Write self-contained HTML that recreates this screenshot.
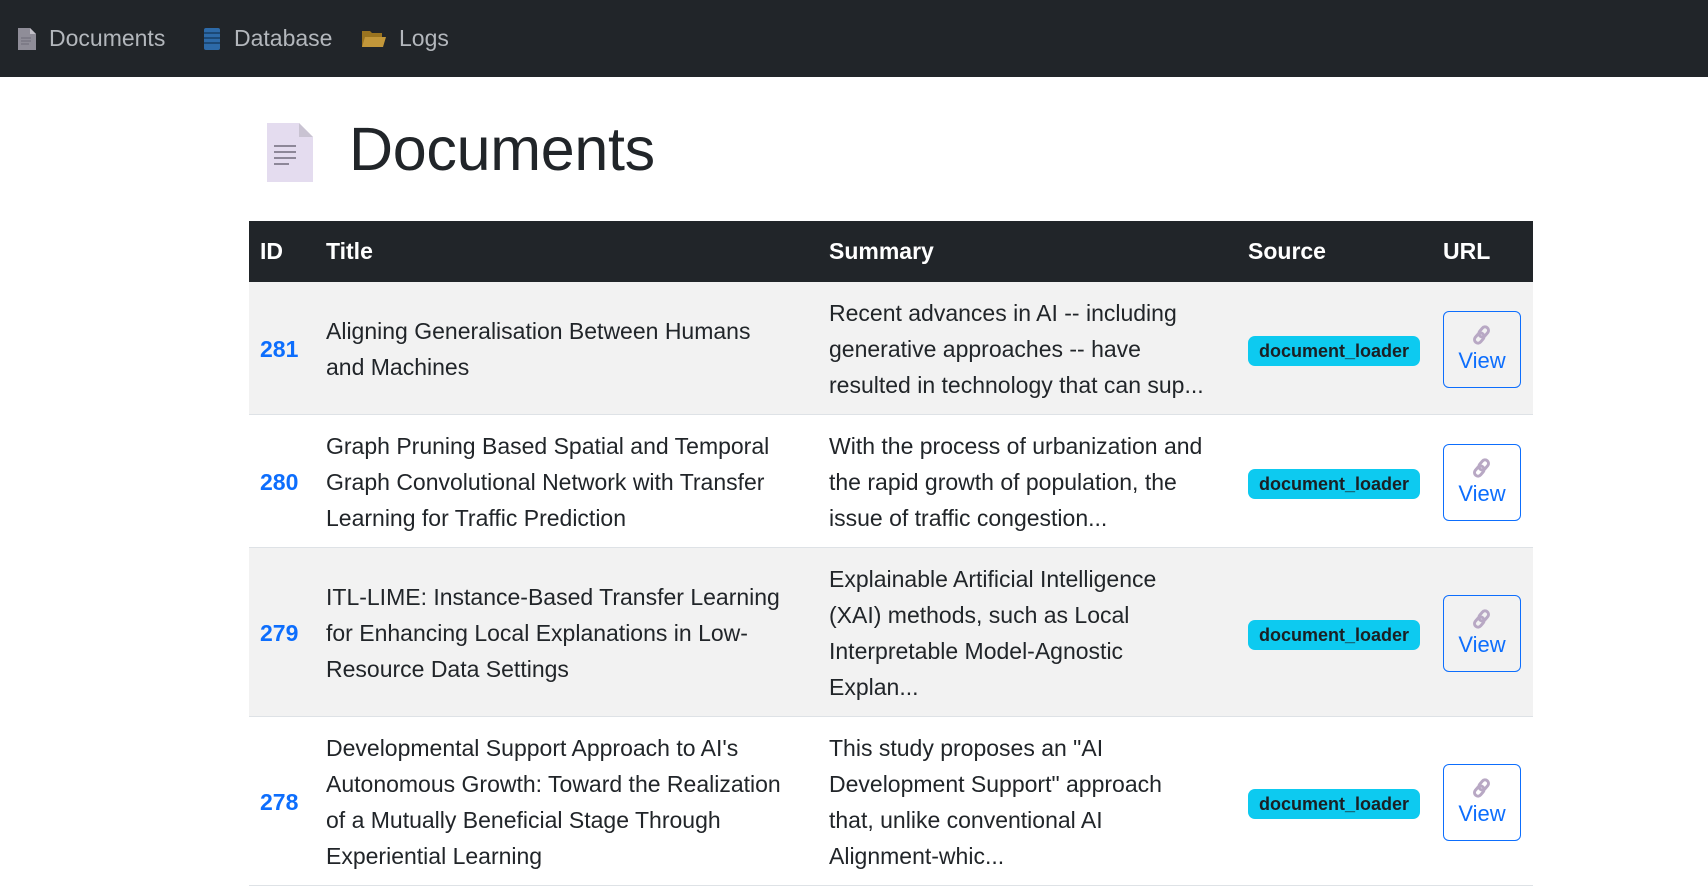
<!DOCTYPE html>
<html><head><meta charset="utf-8"><style>
*{box-sizing:border-box;margin:0;padding:0}
body{width:1708px;height:885px;overflow:hidden;background:#fff;font-family:"Liberation Sans",sans-serif;color:#212529}
.nav{height:77px;background:#212529;position:relative}
.nav .it{position:absolute;top:0;height:77px;display:flex;align-items:center;color:#b3b7bc;font-size:23px}
.nav svg{margin-right:13px}
h1{position:absolute;left:349px;top:114px;font-size:61px;font-weight:normal;letter-spacing:-0.3px;color:#212529}
.hicon{position:absolute;left:267px;top:123px}
table{position:absolute;left:249px;top:221px;width:1284px;border-collapse:collapse;table-layout:fixed;font-size:23px}
th{background:#212529;color:#fff;text-align:left;height:61px;padding:0 11px;font-size:23px;font-weight:bold}
td{padding:3px 11px 0;border-bottom:1px solid #dee2e6;line-height:36px;white-space:nowrap;vertical-align:middle}
tr.o td{background:#f2f2f2}
.id{color:#0d6efd;font-weight:bold}
.badge{display:inline-block;background:#0dcaf0;color:#1b1f23;font-weight:bold;font-size:18px;line-height:30px;height:30px;padding:0 11px;border-radius:7px}
.btn{display:flex;flex-direction:column;align-items:center;justify-content:center;width:78px;height:77px;border:1px solid #0d6efd;border-radius:6px;color:#0d6efd;font-size:22px;line-height:30px;padding-top:2px}
</style></head><body>
<div class="nav">
 <div class="it" style="left:18px"><svg width="18" height="22" viewBox="0 0 18 22"><path d="M0 0H12L18 6V22H0Z" fill="#8f8d98"/><path d="M12 0V6H18Z" fill="#c2c0c8"/><path d="M3 10H13M3 13H13M3 16H11" stroke="#6e6c78" stroke-width="1"/></svg>Documents</div>
 <div class="it" style="left:203px"><svg width="18" height="22" viewBox="0 0 18 22"><rect x="1" y="0" width="16" height="22" rx="2" fill="#2d6aa8"/><path d="M1 5H17M1 10H17M1 15H17" stroke="#173e66" stroke-width="1.5"/></svg>Database</div>
 <div class="it" style="left:362px"><svg width="24" height="20" viewBox="0 0 24 20"><path d="M0 2H8L10 4H20V18H0Z" fill="#9a7420"/><path d="M3 8H24L21 18H0Z" fill="#c2973a"/></svg>Logs</div>
</div>
<svg class="hicon" width="46" height="59" viewBox="0 0 46 59"><path d="M0 0H32L46 14V59H0Z" fill="#e4dcef"/><path d="M32 0V14H46Z" fill="#c9c3d2"/><path d="M7 23H29M7 29H29M7 35H29M7 41H22" stroke="#8d8798" stroke-width="2"/></svg>
<h1>Documents</h1>
<table>
<colgroup><col style="width:66px"><col style="width:503px"><col style="width:419px"><col style="width:195px"><col style="width:101px"></colgroup>
<tr><th>ID</th><th>Title</th><th>Summary</th><th>Source</th><th>URL</th></tr>
<tr class="o" style="height:132px"><td class="id">281</td><td>Aligning Generalisation Between Humans<br>and Machines</td><td>Recent advances in AI -- including<br>generative approaches -- have<br>resulted in technology that can sup...</td><td><span class="badge">document_loader</span></td><td><a class="btn"><svg width="22" height="22" viewBox="0 0 22 22"><g fill="none" stroke="#b8a8c4" stroke-width="3"><rect x="9" y="2" width="7" height="11" rx="3.5" transform="rotate(40 12 8)"/><rect x="5" y="9" width="7" height="11" rx="3.5" transform="rotate(40 9 14)"/></g></svg>View</a></td></tr>
<tr style="height:133px"><td class="id">280</td><td>Graph Pruning Based Spatial and Temporal<br>Graph Convolutional Network with Transfer<br>Learning for Traffic Prediction</td><td>With the process of urbanization and<br>the rapid growth of population, the<br>issue of traffic congestion...</td><td><span class="badge">document_loader</span></td><td><a class="btn"><svg width="22" height="22" viewBox="0 0 22 22"><g fill="none" stroke="#b8a8c4" stroke-width="3"><rect x="9" y="2" width="7" height="11" rx="3.5" transform="rotate(40 12 8)"/><rect x="5" y="9" width="7" height="11" rx="3.5" transform="rotate(40 9 14)"/></g></svg>View</a></td></tr>
<tr class="o" style="height:169px"><td class="id">279</td><td>ITL-LIME: Instance-Based Transfer Learning<br>for Enhancing Local Explanations in Low-<br>Resource Data Settings</td><td>Explainable Artificial Intelligence<br>(XAI) methods, such as Local<br>Interpretable Model-Agnostic<br>Explan...</td><td><span class="badge">document_loader</span></td><td><a class="btn"><svg width="22" height="22" viewBox="0 0 22 22"><g fill="none" stroke="#b8a8c4" stroke-width="3"><rect x="9" y="2" width="7" height="11" rx="3.5" transform="rotate(40 12 8)"/><rect x="5" y="9" width="7" height="11" rx="3.5" transform="rotate(40 9 14)"/></g></svg>View</a></td></tr>
<tr style="height:169px"><td class="id">278</td><td>Developmental Support Approach to AI's<br>Autonomous Growth: Toward the Realization<br>of a Mutually Beneficial Stage Through<br>Experiential Learning</td><td>This study proposes an "AI<br>Development Support" approach<br>that, unlike conventional AI<br>Alignment-whic...</td><td><span class="badge">document_loader</span></td><td><a class="btn"><svg width="22" height="22" viewBox="0 0 22 22"><g fill="none" stroke="#b8a8c4" stroke-width="3"><rect x="9" y="2" width="7" height="11" rx="3.5" transform="rotate(40 12 8)"/><rect x="5" y="9" width="7" height="11" rx="3.5" transform="rotate(40 9 14)"/></g></svg>View</a></td></tr>
</table>
</body></html>
